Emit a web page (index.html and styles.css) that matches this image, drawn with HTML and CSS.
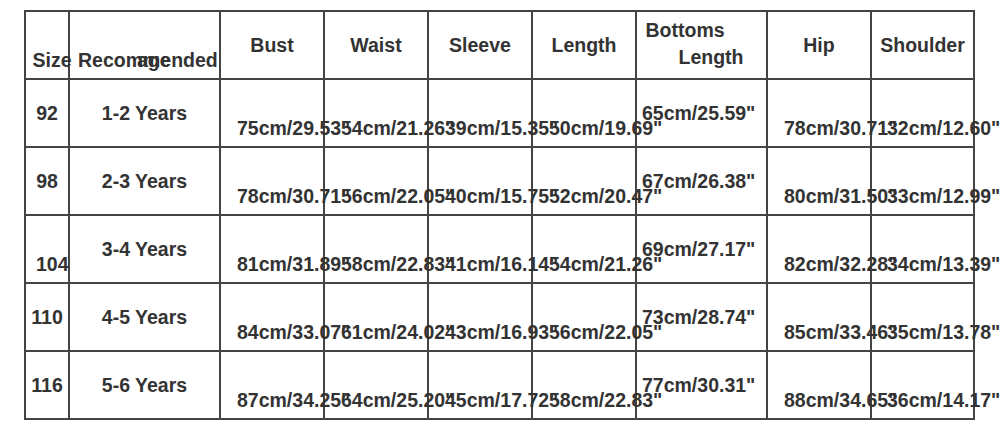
FILE: index.html
```html
<!DOCTYPE html>
<html lang="en">
<head>
<meta charset="utf-8">
<title>Size chart</title>
<link rel="stylesheet" href="styles.css">
</head>
<body>
<table class="chart">
  <colgroup>
    <col class="c-size"><col class="c-age"><col class="c-std"><col class="c-std"><col class="c-std"><col class="c-std"><col class="c-bottoms"><col class="c-std"><col class="c-shoulder">
  </colgroup>
  <thead>
    <tr>
      <th class="h-size">Size</th>
      <th class="h-age">Recommended<span class="age-over">age</span></th>
      <th>Bust</th>
      <th>Waist</th>
      <th>Sleeve</th>
      <th>Length</th>
      <th class="h-bottoms"><span class="b1">Bottoms</span><span class="b2">Length</span></th>
      <th>Hip</th>
      <th>Shoulder</th>
    </tr>
  </thead>
  <tbody>
    <tr>
      <td class="size">92</td><td class="years">1-2 Years</td>
      <td class="v">75cm/29.53"</td><td class="v">54cm/21.26"</td><td class="v">39cm/15.35"</td><td class="v">50cm/19.69"</td>
      <td class="vb">65cm/25.59"</td><td class="v">78cm/30.71"</td><td class="v v-shoulder">32cm/12.60"</td>
    </tr>
    <tr>
      <td class="size">98</td><td class="years">2-3 Years</td>
      <td class="v">78cm/30.71"</td><td class="v">56cm/22.05"</td><td class="v">40cm/15.75"</td><td class="v">52cm/20.47"</td>
      <td class="vb">67cm/26.38"</td><td class="v">80cm/31.50"</td><td class="v v-shoulder">33cm/12.99"</td>
    </tr>
    <tr>
      <td class="size size-low">104</td><td class="years">3-4 Years</td>
      <td class="v">81cm/31.89"</td><td class="v">58cm/22.83"</td><td class="v">41cm/16.14"</td><td class="v">54cm/21.26"</td>
      <td class="vb">69cm/27.17"</td><td class="v">82cm/32.28"</td><td class="v v-shoulder">34cm/13.39"</td>
    </tr>
    <tr>
      <td class="size">110</td><td class="years">4-5 Years</td>
      <td class="v">84cm/33.07"</td><td class="v">61cm/24.02"</td><td class="v">43cm/16.93"</td><td class="v">56cm/22.05"</td>
      <td class="vb">73cm/28.74"</td><td class="v">85cm/33.46"</td><td class="v v-shoulder">35cm/13.78"</td>
    </tr>
    <tr>
      <td class="size">116</td><td class="years">5-6 Years</td>
      <td class="v">87cm/34.25"</td><td class="v">64cm/25.20"</td><td class="v">45cm/17.72"</td><td class="v">58cm/22.83"</td>
      <td class="vb">77cm/30.31"</td><td class="v">88cm/34.65"</td><td class="v v-shoulder">36cm/14.17"</td>
    </tr>
  </tbody>
</table>
</body>
</html>
```
FILE: styles.css
```css
html, body {
  margin: 0;
  padding: 0;
  background: #ffffff;
  overflow: hidden;
}

body {
  padding: 10px 0 0 24px;
  font-family: "Liberation Sans", Arial, sans-serif;
  font-size: 19.5px;
  font-weight: bold;
  color: #333333;
}

.chart {
  table-layout: fixed;
  border-collapse: separate;
  border-spacing: 0;
  width: 951px;
  border-top: 2px solid #444444;
  border-left: 2px solid #444444;
}

.c-size { width: 44px; }
.c-age { width: 151px; }
.c-std { width: 104px; }
.c-bottoms { width: 131px; }
.c-shoulder { width: 103px; }

.chart tr {
  height: 68px;
}

.chart th,
.chart td {
  box-sizing: border-box;
  border-right: 2px solid #444444;
  border-bottom: 2px solid #444444;
  padding: 0;
  line-height: 22px;
  white-space: nowrap;
  overflow: visible;
  font-weight: bold;
  text-align: center;
  vertical-align: middle;
}

.chart .h-size {
  text-align: left;
  vertical-align: bottom;
  padding: 0 0 7px 6.5px;
}

.chart .h-age {
  position: relative;
  text-align: left;
  vertical-align: bottom;
  padding: 0 0 7px 8px;
}

.age-over {
  position: absolute;
  left: 67px;
  bottom: 7px;
}

.chart .h-bottoms {
  text-align: left;
  vertical-align: top;
  line-height: 27.7px;
  padding-top: 4.7px;
}

.b1 {
  display: block;
  padding-left: 8.5px;
}

.b2 {
  display: block;
  padding-left: 41.5px;
}

.chart .size-low {
  text-align: left;
  vertical-align: bottom;
  padding: 0 0 7px 10px;
}

.chart .v {
  text-align: left;
  vertical-align: bottom;
  padding: 0 0 7px 16px;
}

.chart .v-shoulder {
  padding-left: 15px;
}

.chart .vb {
  text-align: left;
  vertical-align: middle;
  padding-left: 5px;
}
```
